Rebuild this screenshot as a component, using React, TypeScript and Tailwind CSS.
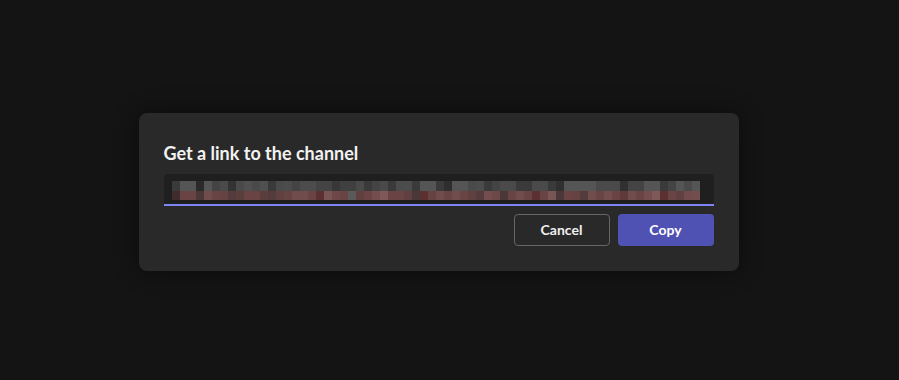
const GREYS = [
  0x3a, 0x55, 0x55, 0x2a, 0x55, 0x44, 0x4a, 0x33, 0x4a, 0x50, 0x4a, 0x50, 0x3a, 0x4a, 0x4c, 0x44,
  0x4c, 0x4c, 0x44, 0x44, 0x38, 0x40, 0x40, 0x4a, 0x3a, 0x44, 0x4a, 0x3a, 0x4c, 0x4c, 0x3a, 0x55,
  0x55, 0x3a, 0x2e, 0x55, 0x55, 0x4a, 0x4c, 0x3a, 0x44, 0x4a, 0x4a, 0x3a, 0x3a, 0x4a, 0x4a, 0x3a,
  0x30, 0x55, 0x55, 0x55, 0x55, 0x4a, 0x4a, 0x4a, 0x30, 0x44, 0x44, 0x55, 0x55, 0x3a, 0x44, 0x55,
  0x4a, 0x55,
]
const REDS: [number, number, number][] = [
  [0x40, 0x2c, 0x2c], [0x6a, 0x44, 0x44], [0x6a, 0x44, 0x44], [0x4a, 0x38, 0x38], [0x70, 0x4c, 0x4c],
  [0x6a, 0x44, 0x44], [0x66, 0x42, 0x42], [0x55, 0x3c, 0x3c], [0x5a, 0x3e, 0x3e], [0x6a, 0x44, 0x44],
  [0x6a, 0x44, 0x44], [0x5a, 0x3e, 0x3e], [0x55, 0x3c, 0x3c], [0x60, 0x40, 0x40], [0x66, 0x44, 0x44],
  [0x70, 0x4c, 0x4c], [0x70, 0x4c, 0x4c], [0x6a, 0x44, 0x44], [0x5a, 0x30, 0x30], [0x7a, 0x55, 0x55],
  [0x6e, 0x48, 0x48], [0x6a, 0x44, 0x44], [0x5a, 0x5a, 0x5a], [0x60, 0x40, 0x40], [0x6a, 0x44, 0x44],
  [0x74, 0x4e, 0x4e], [0x80, 0x58, 0x58], [0x6a, 0x44, 0x44], [0x6a, 0x44, 0x44], [0x60, 0x40, 0x40],
  [0x4a, 0x38, 0x38], [0x5a, 0x30, 0x30], [0x66, 0x42, 0x42], [0x70, 0x4c, 0x4c], [0x6a, 0x44, 0x44],
  [0x70, 0x4c, 0x4c], [0x6a, 0x44, 0x44], [0x60, 0x40, 0x40], [0x55, 0x3c, 0x3c], [0x74, 0x4e, 0x4e],
  [0x6e, 0x48, 0x48], [0x4a, 0x38, 0x38], [0x6a, 0x44, 0x44], [0x70, 0x4c, 0x4c], [0x6a, 0x44, 0x44],
  [0x5a, 0x30, 0x30], [0x6a, 0x44, 0x44], [0x7a, 0x55, 0x55], [0x4a, 0x38, 0x38], [0x6a, 0x44, 0x44],
  [0x66, 0x42, 0x42], [0x55, 0x3c, 0x3c], [0x70, 0x4c, 0x4c], [0x6a, 0x44, 0x44], [0x74, 0x4e, 0x4e],
  [0x6a, 0x44, 0x44], [0x60, 0x3a, 0x3a], [0x70, 0x4c, 0x4c], [0x6a, 0x44, 0x44], [0x74, 0x4e, 0x4e],
  [0x80, 0x58, 0x58], [0x5a, 0x30, 0x30], [0x6a, 0x44, 0x44], [0x60, 0x40, 0x40], [0x70, 0x4c, 0x4c],
  [0x74, 0x4e, 0x4e],
]

const hex = (n: number) => n.toString(16).padStart(2, '0')

// pixelated (blurred-out) link inside the field
function Pixelated() {
  return (
    <div className="flex flex-col">
      <div className="flex">
        {GREYS.map((g, i) => (
          <div key={i} className="h-[10px] w-[8px]" style={{ background: `#${hex(g)}${hex(g)}${hex(g)}` }} />
        ))}
      </div>
      <div className="flex">
        {REDS.map(([r, g, b], i) => (
          <div key={i} className="h-[9px] w-[8px]" style={{ background: `#${hex(r)}${hex(g)}${hex(b)}` }} />
        ))}
      </div>
    </div>
  )
}

export default function App() {
  return (
    <div
      className="flex h-[380px] w-full items-center justify-center bg-[#141414] pr-[22px] text-white"
      style={{ fontFamily: 'Lato, "Open Sans", sans-serif' }}
    >
      <div className="mt-[3px] flex w-[600px] flex-col rounded-[8px] bg-[#292929] px-[25px] pb-[25px] pt-[28px] shadow-[0_0_24px_rgba(0,0,0,0.45)]">
        <h1 className="text-[18px] font-bold leading-6 text-[#f2f2f2]">Get a link to the channel</h1>
        <div className="mt-[9px] flex h-[32px] items-start overflow-hidden rounded-t-[4px] border-b-2 border-[#7f85f5] bg-[#1f1f1f] pl-[8px] pt-[7px]">
          <Pixelated />
        </div>
        <div className="mt-[8px] flex justify-end gap-[8px]">
          <button className="h-[32px] w-[96px] rounded-[4px] border border-[#666] bg-transparent text-[14px] font-bold text-[#f0f0f0]">
            Cancel
          </button>
          <button className="h-[32px] w-[96px] rounded-[4px] bg-[#4f52b2] text-[14px] font-bold text-white">
            Copy
          </button>
        </div>
      </div>
    </div>
  )
}
